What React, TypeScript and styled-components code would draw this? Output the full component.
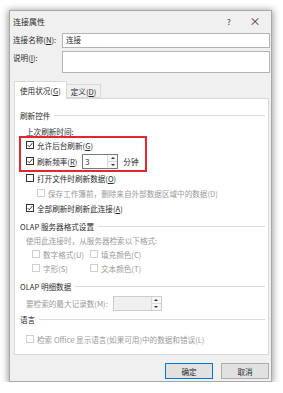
import React from 'react'
import styled, { createGlobalStyle } from 'styled-components'

const FONT = `"Noto Sans CJK SC", "Noto Sans", "Liberation Sans", sans-serif`

const GlobalStyle = createGlobalStyle`
  body {
    margin: 0;
    background: #ffffff;
    font-family: ${FONT};
  }
`

const Dialog = styled.div`
  box-sizing: border-box;
  margin: 10px 0 0 9px;
  width: 263px;
  height: 372px;
  background: #f0f0f0;
  border: 1px solid #a8a8a8;
  box-shadow: 0 1px 7px 1px rgba(0, 0, 0, 0.4);
  display: flex;
  flex-direction: column;
  font-size: 7.6px;
  color: #2b2b2b;
`

const TitleBar = styled.div`
  height: 20px;
  display: flex;
  align-items: center;
  padding-left: 3px;
  font-size: 8px;
`

const TitleText = styled.span`
  flex: 1;
`

const TitleButton = styled.span<{ $w: number }>`
  width: ${p => p.$w}px;
  text-align: center;
  font-size: ${p => (p.$w > 25 ? 11 : 8)}px;
  color: #333;
`

const FieldRow = styled.div<{ $top: number; $h: number }>`
  display: flex;
  align-items: flex-start;
  margin-top: ${p => p.$top}px;
  padding: 0 1px 0 3px;
  height: ${p => p.$h}px;
`

const FieldLabel = styled.span`
  width: 49px;
  line-height: 14px;
`

const TextBox = styled.div<{ $h: number }>`
  box-sizing: border-box;
  flex: 1;
  height: ${p => p.$h}px;
  background: #fff;
  border: 1px solid #b4b4b4;
  padding-left: 3px;
  line-height: 12px;
`

const TabStrip = styled.div`
  display: flex;
  align-items: flex-end;
  margin: 7px 0 0 4px;
  height: 18px;
  position: relative;
  z-index: 1;
`

const Tab = styled.div<{ $active?: boolean }>`
  box-sizing: border-box;
  height: ${p => (p.$active ? 18 : 14)}px;
  padding: ${p => (p.$active ? '0 5px' : '0 4px')};
  display: flex;
  align-items: center;
  background: ${p => (p.$active ? '#fff' : '#f0f0f0')};
  border: 1px solid #d9d9d9;
  border-bottom: ${p => (p.$active ? 'none' : '1px solid #d9d9d9')};
  border-left: ${p => (p.$active ? '1px solid #d9d9d9' : 'none')};
  margin-bottom: ${p => (p.$active ? -1 : 0)}px;
`

const Panel = styled.div`
  box-sizing: border-box;
  margin: 0 2px 0 4px;
  height: 257px;
  background: #fff;
  border: 1px solid #d9d9d9;
  padding: 9px 0 0 5px;
  display: flex;
  flex-direction: column;
`

const Heading = styled.div<{ $top: number }>`
  display: flex;
  align-items: center;
  height: 14px;
  margin-top: ${p => p.$top}px;
  gap: 4px;
  padding-right: 3px;

  &::after {
    content: '';
    flex: 1;
    height: 1px;
    background: #dcdcdc;
  }
`

const Line = styled.div<{ $top?: number; $indent?: number; $h?: number; $disabled?: boolean }>`
  display: flex;
  align-items: center;
  height: ${p => p.$h ?? 14}px;
  margin-top: ${p => p.$top ?? 0}px;
  padding-left: ${p => p.$indent ?? 6}px;
  color: ${p => (p.$disabled ? '#9a9a9a' : 'inherit')};
  white-space: nowrap;
`

const Highlight = styled.div`
  box-sizing: border-box;
  width: 128px;
  margin: -2px 0 0 -1px;
  padding: 0 0 2px 5px;
  border: 2px solid #e8242c;
`

const Box = styled.span<{ $disabled?: boolean }>`
  box-sizing: border-box;
  width: 8px;
  height: 8px;
  border: 1px solid ${p => (p.$disabled ? '#cfcfcf' : '#333')};
  background: #fff;
  display: inline-flex;
  align-items: center;
  justify-content: center;
  margin-right: 3px;
  flex-shrink: 0;
`

const Spin = styled.div<{ $w: number; $gap: number; $disabled?: boolean }>`
  box-sizing: border-box;
  width: ${p => p.$w}px;
  height: 15px;
  margin-left: ${p => p.$gap}px;
  border: 1px solid ${p => (p.$disabled ? '#cccccc' : '#7a7a7a')};
  background: ${p => (p.$disabled ? '#f0f0f0' : '#fff')};
  display: flex;
  align-items: stretch;
`

const SpinValue = styled.span`
  flex: 1;
  padding-left: 2px;
  line-height: 13px;
`

const SpinArrows = styled.div`
  width: 9px;
  display: flex;
  flex-direction: column;
  border-left: 1px solid #dadada;
  background: #f6f6f6;
`

const Arrow = styled.div<{ $down?: boolean }>`
  flex: 1;
  display: flex;
  align-items: center;
  justify-content: center;
  border-top: ${p => (p.$down ? '1px solid #dadada' : 'none')};

  &::before {
    content: '';
    border-left: 2px solid transparent;
    border-right: 2px solid transparent;
    ${p => (p.$down ? 'border-top' : 'border-bottom')}: 2px solid #333;
  }
`

const Unit = styled.span`
  margin-left: 5px;
`

const Grid = styled.div`
  display: grid;
  grid-template-columns: 58px auto;
  padding-left: 12px;
`

const Footer = styled.div`
  display: flex;
  justify-content: flex-end;
  gap: 8px;
  margin-top: 8px;
  padding-right: 2px;
`

const Button = styled.div<{ $primary?: boolean }>`
  box-sizing: border-box;
  width: 48px;
  height: 16px;
  display: flex;
  align-items: center;
  justify-content: center;
  background: #e1e1e1;
  border: 1px solid ${p => (p.$primary ? '#0078d7' : '#adadad')};
`

const Check: React.FC = () => (
  <svg width="6" height="6" viewBox="0 0 6 6">
    <path d="M0.6 3.1 L2.3 4.8 L5.4 1" fill="none" stroke="#222" strokeWidth="0.9" />
  </svg>
)

const CheckItem: React.FC<{ label: string; checked?: boolean; disabled?: boolean }> = ({ label, checked, disabled }) => (
  <>
    <Box $disabled={disabled}>{checked && <Check />}</Box>
    <span>{label}</span>
  </>
)

const Spinner: React.FC<{ w: number; gap: number; value?: string; disabled?: boolean }> = ({ w, gap, value, disabled }) => (
  <Spin $w={w} $gap={gap} $disabled={disabled}>
    <SpinValue>{value}</SpinValue>
    <SpinArrows>
      <Arrow />
      <Arrow $down />
    </SpinArrows>
  </Spin>
)

const App: React.FC = () => {
  return (
    <>
      <GlobalStyle />
      <Dialog>
        <TitleBar>
          <TitleText>连接属性</TitleText>
          <TitleButton $w={20}>?</TitleButton>
          <TitleButton $w={32}>×</TitleButton>
        </TitleBar>
        <FieldRow $top={2} $h={15}>
          <FieldLabel>连接名称(<u>N</u>):</FieldLabel>
          <TextBox $h={15}>连接</TextBox>
        </FieldRow>
        <FieldRow $top={3} $h={22}>
          <FieldLabel>说明(<u>I</u>):</FieldLabel>
          <TextBox $h={22} />
        </FieldRow>

        <TabStrip>
          <Tab $active>使用状况(<u>G</u>)</Tab>
          <Tab>定义(<u>D</u>)</Tab>
        </TabStrip>
        <Panel>
          <Heading $top={0}>刷新控件</Heading>
          <Line $top={2}>上次刷新时间:</Line>
          <Highlight>
            <Line $indent={0}>
              <Box><Check /></Box>
              <span>允许后台刷新(<u>G</u>)</span>
            </Line>
            <Line $indent={0} $top={2}>
              <Box><Check /></Box>
              <span>刷新频率(<u>R</u>)</span>
              <Spinner w={36} gap={5} value="3" />
              <Unit>分钟</Unit>
            </Line>
          </Highlight>
          <Line $top={-1}>
            <Box />
            <span>打开文件时刷新数据(<u>O</u>)</span>
          </Line>
          <Line $top={1} $indent={17} $disabled>
            <CheckItem disabled label="保存工作簿前，删除来自外部数据区域中的数据(D)" />
          </Line>
          <Line $top={1}>
            <Box><Check /></Box>
            <span>全部刷新时刷新此连接(<u>A</u>)</span>
          </Line>

          <Heading $top={4}>OLAP 服务器格式设置</Heading>
          <Line $disabled>使用此连接时，从服务器检索以下格式:</Line>
          <Grid>
            <Line $indent={0} $disabled><CheckItem disabled label="数字格式(U)" /></Line>
            <Line $indent={0} $disabled><CheckItem disabled label="填充颜色(C)" /></Line>
            <Line $indent={0} $disabled><CheckItem disabled label="字形(S)" /></Line>
            <Line $indent={0} $disabled><CheckItem disabled label="文本颜色(T)" /></Line>
          </Grid>

          <Heading $top={4}>OLAP 明细数据</Heading>
          <Line $top={2} $h={16} $disabled>
            <span>要检索的最大记录数(M):</span>
            <Spinner w={49} gap={5} disabled />
          </Line>

          <Heading $top={1}>语言</Heading>
          <Line $top={6} $disabled>
            <CheckItem disabled label="检索 Office 显示语言(如果可用)中的数据和错误(L)" />
          </Line>
        </Panel>
        <Footer>
          <Button $primary>确定</Button>
          <Button>取消</Button>
        </Footer>
      </Dialog>
    </>
  )
}

export default App
